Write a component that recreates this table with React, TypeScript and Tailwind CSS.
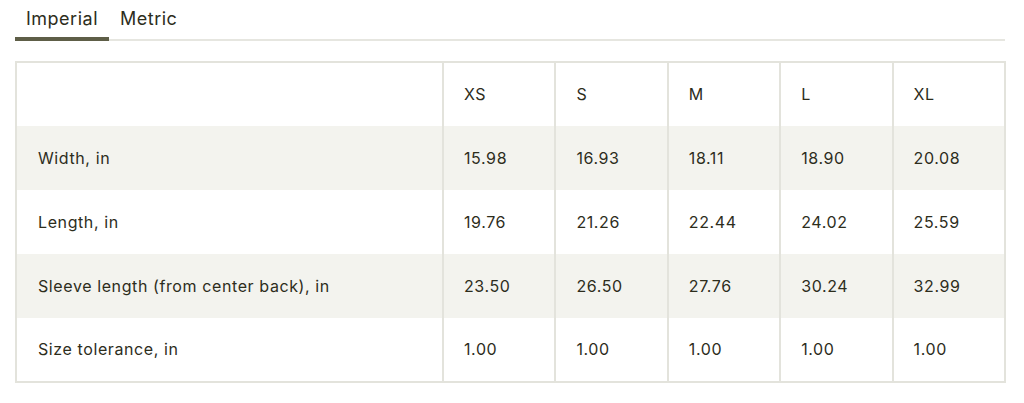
const sizes = ["XS", "S", "M", "L", "XL"];

const rows = [
  { label: "Width, in", values: ["15.98", "16.93", "18.11", "18.90", "20.08"] },
  { label: "Length, in", values: ["19.76", "21.26", "22.44", "24.02", "25.59"] },
  { label: "Sleeve length (from center back), in", values: ["23.50", "26.50", "27.76", "30.24", "32.99"] },
  { label: "Size tolerance, in", values: ["1.00", "1.00", "1.00", "1.00", "1.00"] },
];

export default function App() {
  return (
    <div className="bg-white px-[15px] pr-[19px] text-[#2d2d1c] font-['Inter','Noto_Sans',sans-serif]">
      {/* Tabs */}
      <div className="flex border-b-2 border-[#e6e6e0]">
        <button className="h-[41px] -mb-[2px] px-[11px] pb-[1px] border-b-4 border-[#5e5e47] text-[18px] tracking-[0.5px] text-[#2d2d1c]">
          Imperial
        </button>
        <button className="h-[41px] -mb-[2px] px-[11px] pb-[5px] text-[18px] tracking-[0.5px] text-[#2d2d1c]">
          Metric
        </button>
      </div>

      {/* Size table */}
      <table className="mt-[20px] w-[991px] table-fixed border-collapse border-2 border-[#e3e3dc] text-[16px] tracking-[0.6px]">
        <colgroup>
          <col className="w-[427px]" />
          {sizes.map((s) => (
            <col key={s} />
          ))}
        </colgroup>
        <thead>
          <tr className="h-[64px]">
            <th className="border-r-2 border-[#e3e3dc]" />
            {sizes.map((s) => (
              <th key={s} className="border-r-2 border-[#e3e3dc] pl-[20px] pb-[1px] text-left font-normal">
                {s}
              </th>
            ))}
          </tr>
        </thead>
        <tbody>
          {rows.map((row, idx) => (
            <tr key={row.label} className={`h-[64px] ${idx % 2 === 0 ? "bg-[#f3f3ee]" : "bg-white"}`}>
              <td className="border-r-2 border-[#e3e3dc] pl-[21px] pb-[1px]">{row.label}</td>
              {row.values.map((v, i) => (
                <td key={i} className="border-r-2 border-[#e3e3dc] pl-[20px] pb-[1px]">
                  {v}
                </td>
              ))}
            </tr>
          ))}
        </tbody>
      </table>
    </div>
  );
}
